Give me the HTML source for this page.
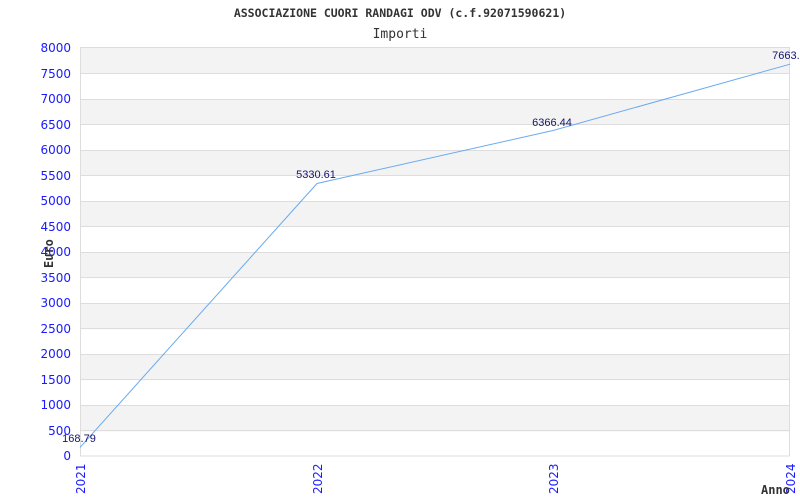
<!DOCTYPE html>
<html><head><meta charset="utf-8"><style>
html,body{margin:0;padding:0;background:#fff;width:800px;height:500px;overflow:hidden}
svg{display:block}
</style></head><body>
<svg width="800" height="500" xmlns="http://www.w3.org/2000/svg">
<text x="400" y="17" text-anchor="middle" font-family="DejaVu Sans Mono, Liberation Mono, monospace" font-size="11.5" font-weight="bold" fill="#333">ASSOCIAZIONE CUORI RANDAGI ODV (c.f.92071590621)</text>
<text x="400" y="38" text-anchor="middle" font-family="DejaVu Sans Mono, Liberation Mono, monospace" font-size="13" fill="#333">Importi</text>
<rect x="80.5" y="47.5" width="709" height="408.5" fill="#fff" stroke="#ddd"/>
<g fill="#f3f3f3">
<rect x="81" y="48" width="708" height="25"/>
<rect x="81" y="99.1" width="708" height="25.6"/>
<rect x="81" y="150.2" width="708" height="25.6"/>
<rect x="81" y="201.4" width="708" height="25.6"/>
<rect x="81" y="252.5" width="708" height="25.6"/>
<rect x="81" y="303.6" width="708" height="25.6"/>
<rect x="81" y="354.7" width="708" height="25.6"/>
<rect x="81" y="405.9" width="708" height="25.6"/>
</g>
<g stroke="#ddd" stroke-width="1">
<line x1="81" x2="789" y1="73.5" y2="73.5"/><line x1="81" x2="789" y1="99.5" y2="99.5"/>
<line x1="81" x2="789" y1="124.5" y2="124.5"/><line x1="81" x2="789" y1="150.5" y2="150.5"/>
<line x1="81" x2="789" y1="175.5" y2="175.5"/><line x1="81" x2="789" y1="201.5" y2="201.5"/>
<line x1="81" x2="789" y1="226.5" y2="226.5"/><line x1="81" x2="789" y1="252.5" y2="252.5"/>
<line x1="81" x2="789" y1="277.5" y2="277.5"/><line x1="81" x2="789" y1="303.5" y2="303.5"/>
<line x1="81" x2="789" y1="328.5" y2="328.5"/><line x1="81" x2="789" y1="354.5" y2="354.5"/>
<line x1="81" x2="789" y1="379.5" y2="379.5"/><line x1="81" x2="789" y1="405.5" y2="405.5"/>
<line x1="81" x2="789" y1="430.5" y2="430.5"/>
</g>
<g font-family="DejaVu Sans, Liberation Sans, sans-serif" font-size="12" fill="#1a1aff" text-anchor="end">
<text x="71" y="52">8000</text><text x="71" y="78">7500</text><text x="71" y="103">7000</text>
<text x="71" y="129">6500</text><text x="71" y="154">6000</text><text x="71" y="180">5500</text>
<text x="71" y="205">5000</text><text x="71" y="231">4500</text><text x="71" y="256">4000</text>
<text x="71" y="282">3500</text><text x="71" y="307">3000</text><text x="71" y="333">2500</text>
<text x="71" y="358">2000</text><text x="71" y="384">1500</text><text x="71" y="409">1000</text>
<text x="71" y="435">500</text><text x="71" y="460">0</text>
</g>
<g font-family="DejaVu Sans, Liberation Sans, sans-serif" font-size="12" fill="#1a1aff">
<text transform="translate(85,494) rotate(-90)">2021</text>
<text transform="translate(322,494) rotate(-90)">2022</text>
<text transform="translate(558,494) rotate(-90)">2023</text>
<text transform="translate(795,494) rotate(-90)">2024</text>
</g>
<text transform="translate(53,268) rotate(-90)" font-family="DejaVu Sans Mono, monospace" font-size="12" font-weight="bold" fill="#333">Euro</text>
<text x="761" y="494" font-family="DejaVu Sans Mono, monospace" font-size="12" font-weight="bold" fill="#333">Anno</text>
<polyline points="80,447.4 317,183.5 553,130.5 790,64.2" fill="none" stroke="#6aaaf0" stroke-width="1"/>
<g font-family="Liberation Sans, sans-serif" font-size="11" fill="#14146e" text-anchor="middle">
<text x="79" y="442">168.79</text>
<text x="316" y="178">5330.61</text>
<text x="552" y="126">6366.44</text>
<text x="789" y="59">7663.0</text>
</g>
</svg>
</body></html>
